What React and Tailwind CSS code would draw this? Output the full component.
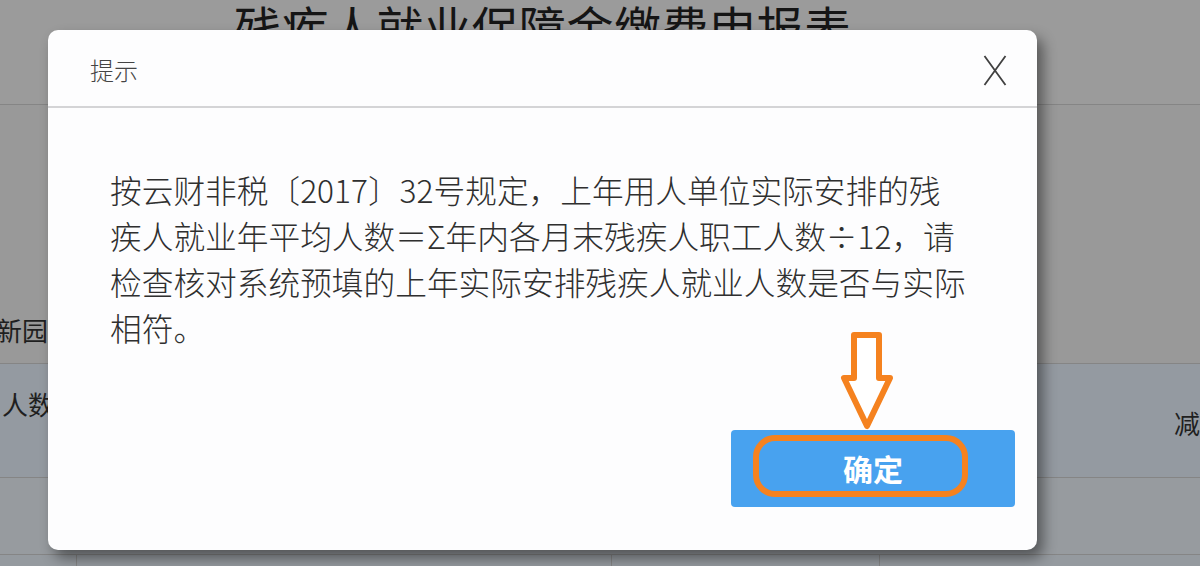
import React from "react";

const cjk = { fontFamily: '"Noto Sans CJK SC", "Noto Sans", sans-serif' };

export default function App() {
  return (
    <div className="relative w-[1200px] h-[566px] overflow-hidden bg-[#9a9a9a]" style={cjk}>
      {/* Background page (dimmed) */}
      <div className="flex flex-col h-full">
        <div className="h-[105px] border-b border-[#858585] bg-[#9b9b9b] pl-[234px] pt-[2px]">
          <div className="text-[47px] leading-none tracking-[0.5px] text-[#151515] whitespace-nowrap">残疾人就业保障金缴费申报表</div>
        </div>
        <div className="h-[259px] border-b border-[#858585] bg-[#999999] flex items-end pb-[20px] pl-0">
          <div className="text-[26px] leading-none text-[#1f1f1f] -ml-[4px] whitespace-nowrap">新园</div>
        </div>
        <div className="h-[114px] border-b border-[#858585] bg-[#949aa1] flex items-center justify-between">
          <div className="text-[26px] leading-none text-[#1f1f1f] -mt-[34px] ml-[2px] whitespace-nowrap">人数</div>
          <div className="text-[26px] leading-none text-[#1f1f1f] -mr-[26px] mt-[4px] whitespace-nowrap">减免</div>
        </div>
        <div className="h-[77px] border-b border-[#858585] bg-[#979b9f]"></div>
        <div className="flex-1 flex bg-[#959a9f]">
          <div className="w-[77px] border-r border-[#858585]"></div>
          <div className="w-[535px] border-r border-[#858585]"></div>
          <div className="w-[268px] border-r border-[#858585]"></div>
        </div>
      </div>

      {/* Modal */}
      <div className="absolute left-[48px] top-[30px] w-[989px] h-[520px] bg-[#fdfdfe] rounded-[10px] shadow-[6px_8px_14px_rgba(0,0,0,0.45)] flex flex-col">
        <div className="h-[78px] border-b-2 border-[#d4d4d6] flex items-center justify-between pl-[42px] pr-[30px]">
          <span className="text-[24px] font-light text-[#444] leading-none mt-[4px]">提示</span>
          <svg width="24" height="31" viewBox="0 0 24 31" className="mt-[4px]">
            <path d="M1.5 1 L22.5 30 M22.5 1 L1.5 30" stroke="#404040" strokeWidth="1.8" fill="none" />
          </svg>
        </div>
        <div className="pl-[62px] pt-[58px] text-[31.7px] font-light leading-[46px] text-[#2f2f2f] whitespace-nowrap">
          按云财非税〔2017〕32号规定，上年用人单位实际安排的残<br />
          疾人就业年平均人数＝Σ年内各月末残疾人职工人数÷12，请<br />
          检查核对系统预填的上年实际安排残疾人就业人数是否与实际<br />
          相符。
        </div>
        <div className="mt-auto flex justify-end pr-[22px] pb-[43px]">
          <button className="w-[284px] h-[77px] rounded-[4px] bg-[#48a2ef] text-white text-[30px] font-bold flex items-center justify-center" style={cjk}>
            确定
          </button>
        </div>
      </div>

      {/* Annotations */}
      <div className="absolute left-[753px] top-[435px] w-[215px] h-[62px] rounded-[22px] border-[6px] border-[#f5821f]"></div>
      <svg className="absolute left-[838px] top-[330px]" width="58" height="102" viewBox="0 0 58 102">
        <path d="M16 5 L41 5 L41 48 L52 48 L29 96 L6 48 L16 48 Z" fill="#fff" stroke="#f5821f" strokeWidth="6" strokeLinejoin="round" />
      </svg>
    </div>
  );
}
